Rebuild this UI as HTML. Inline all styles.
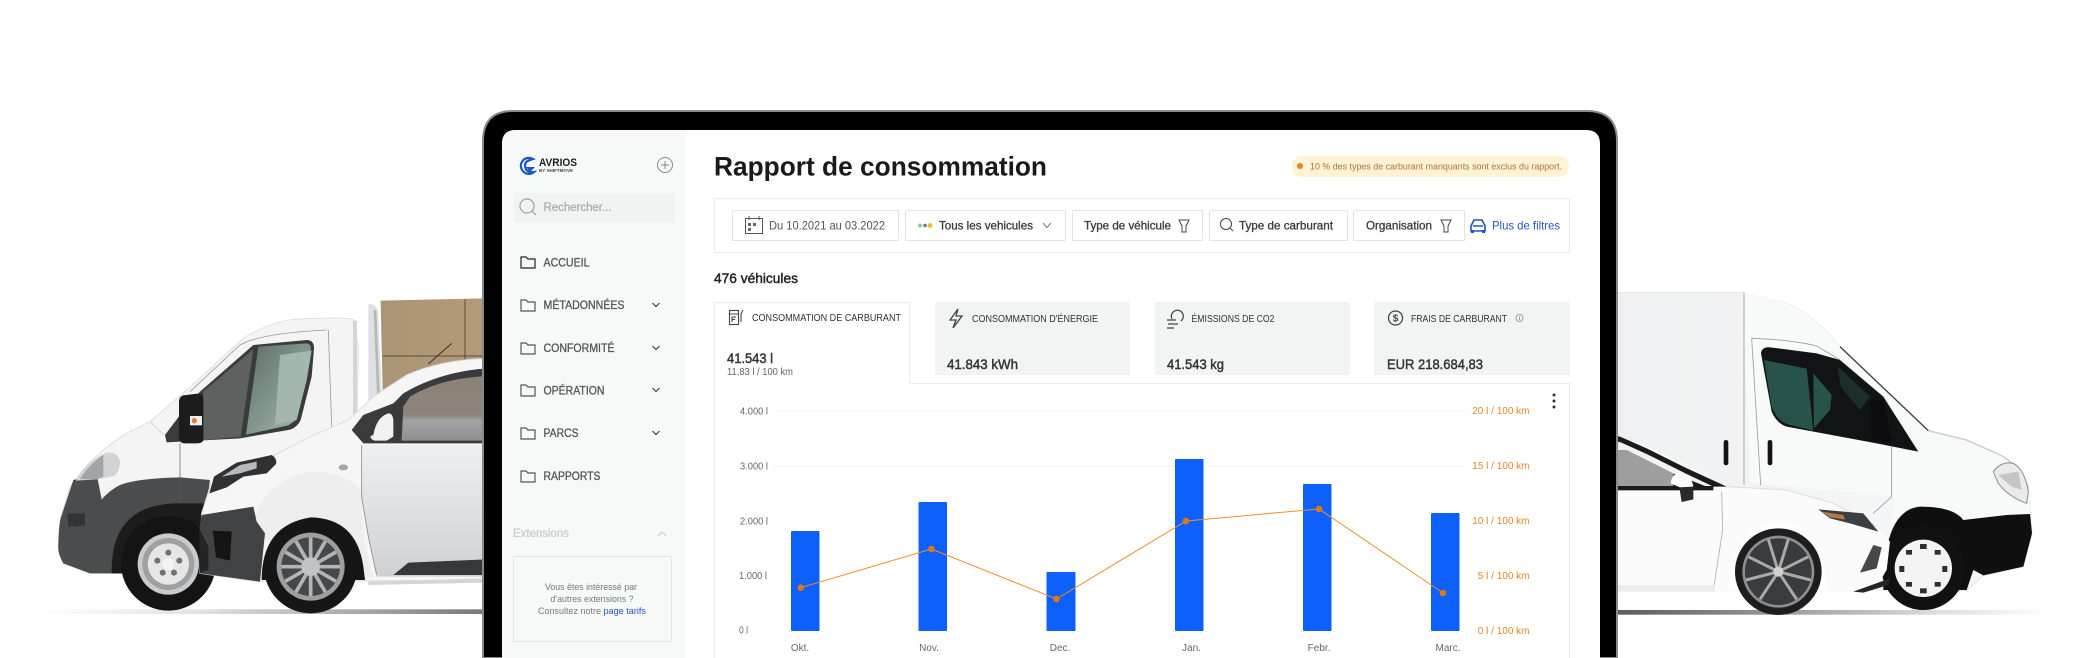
<!DOCTYPE html>
<html lang="fr"><head><meta charset="utf-8"><title>Rapport de consommation</title>
<style>
html,body{margin:0;padding:0;background:#fff;width:2087px;height:658px;overflow:hidden}
svg{display:block;filter:blur(.35px)}
text{font-family:"Liberation Sans",sans-serif;}
.nav{font-size:11.5px;fill:#555;stroke:#555;stroke-width:.3}
.k{font-size:10px;fill:#555}
.ch{font-size:12px;fill:#3a3a3a;stroke:#3a3a3a;stroke-width:.3}
.t{font-size:10px;fill:#333}
.v{font-size:14px;fill:#333;stroke:#333;stroke-width:.45}
.l{font-size:10px;fill:#666}
.r{font-size:10px;fill:#e8852a}
</style></head><body>
<svg width="2087" height="658" viewBox="0 0 2087 658" xmlns="http://www.w3.org/2000/svg">
<defs>
<linearGradient id="sh" x1="0" x2="1" y1="0" y2="0"><stop offset="0" stop-color="#fff"/><stop offset=".35" stop-color="#e2e2e2"/><stop offset=".7" stop-color="#aaa"/><stop offset="1" stop-color="#777"/></linearGradient>
<linearGradient id="shr" x1="0" x2="1" y1="0" y2="0"><stop offset="0" stop-color="#555"/><stop offset=".4" stop-color="#999"/><stop offset=".75" stop-color="#ddd"/><stop offset="1" stop-color="#fff"/></linearGradient>
<linearGradient id="box" x1="0" x2="1" y1="0" y2="0"><stop offset="0" stop-color="#ab9476"/><stop offset="1" stop-color="#b49a78"/></linearGradient>
<linearGradient id="door" x1="0" x2="0" y1="0" y2="1"><stop offset="0" stop-color="#eeeff0"/><stop offset=".6" stop-color="#dcdddf"/><stop offset="1" stop-color="#cfd0d2"/></linearGradient>
<linearGradient id="glass" x1="0" x2="1" y1="0" y2="1"><stop offset="0" stop-color="#5d6e65"/><stop offset="1" stop-color="#a8bdb0"/></linearGradient>
<linearGradient id="cg" x1="0" x2="0" y1="0" y2="1"><stop offset="0" stop-color="#8b8176"/><stop offset=".6" stop-color="#8c857c"/><stop offset=".7" stop-color="#a3a3a3"/><stop offset="1" stop-color="#8e8e8e"/></linearGradient>
<linearGradient id="vb" x1="0" x2="1" y1="0" y2="0"><stop offset="0" stop-color="#eff0f1"/><stop offset="1" stop-color="#f7f8f8"/></linearGradient>
</defs>
<rect width="2087" height="658" fill="#fff"/>

<!-- LEFT VEHICLES -->
<g transform="translate(40 280) scale(.33333)">
<rect x="0" y="988" width="1340" height="14" fill="url(#sh)"/>
<path d="M1022 62L1330 55V330H1028Z" fill="url(#box)"/>
<path d="M1275 58V240M1028 228H1330" stroke="#5f4c38" stroke-width="3" fill="none"/>
<path d="M1165 252L1235 190" stroke="#3a3028" stroke-width="3"/>
<path d="M985 72Q1010 70 1014 100L1026 345L985 400Z" fill="#dfe0e1"/>
<path d="M1005 90L1015 340" stroke="#9c9c9c" stroke-width="8" opacity=".6"/>
<path d="M940 118Q905 110 760 118Q680 130 610 175L440 330L330 425L260 460Q180 510 130 570L90 620L60 720L55 800L70 850L150 880H560L700 600L950 500L955 200Z" fill="#f4f4f5" stroke="#e0e0e1" stroke-width="3"/>
<path d="M945 122V420" stroke="#d5d5d6" stroke-width="12"/>
<path d="M865 150L875 440M450 335L600 195Q660 160 860 150" stroke="#9a9a9b" stroke-width="2.5" fill="none"/>
<path d="M330 425L372 465" stroke="#ccc" stroke-width="2"/>
<path d="M100 600Q140 590 172 592L185 658Q210 630 240 615Q290 595 420 592L510 600L500 680L480 880L150 880L70 850Q52 820 55 795Q56 740 62 715Z" fill="#4b4c4e"/>
<path d="M82 700H135V735L110 740H85Z" fill="#333436"/>
<path d="M215 880Q210 680 400 670L500 670L520 880Z" fill="#1c1c1d"/>
<circle cx="385" cy="850" r="142" fill="#141415"/>
<circle cx="385" cy="852" r="92" fill="#c9cacb"/>
<circle cx="385" cy="852" r="78" fill="#9fa0a1"/>
<circle cx="385" cy="852" r="62" fill="#e6e6e7"/>
<g fill="#6f7071"><circle cx="385" cy="818" r="9"/><circle cx="418" cy="842" r="9"/><circle cx="402" cy="878" r="9"/><circle cx="368" cy="878" r="9"/><circle cx="352" cy="842" r="9"/></g>
<circle cx="385" cy="852" r="18" fill="#f3f3f3"/>
<path d="M640 195L800 180Q822 180 822 205L815 290L782 420Q770 445 745 450L600 475L380 487L375 465L420 405L480 335Z" fill="#3a3c3c"/>
<path d="M655 200L800 190Q815 192 812 212L800 300L768 420L745 436L618 464Z" fill="url(#glass)"/>
<path d="M720 225L815 212L800 300L770 420L705 435Z" fill="#a4b7ac"/>
<path d="M640 208L602 470L490 480V335Z" fill="#5f6060"/>
<path d="M417 365Q417 345 440 345L478 340Q490 345 490 360V480Q488 490 470 490H430Q417 488 417 470Z" fill="#1c1c1d"/>
<rect x="450" y="408" width="36" height="28" fill="#eee"/><circle cx="463" cy="422" r="8" fill="#d9813e"/>
<path d="M108 602Q130 550 200 518Q235 515 240 545Q240 575 222 588L170 598Z" fill="#d2d3d4"/>
<path d="M120 597Q150 550 190 525V590L170 598Z" fill="#a3a4a5"/>
<path d="M420 490V670" stroke="#555" stroke-width="2"/>

<!-- car -->
<path d="M1340 235Q1200 240 1100 285L1000 350L925 420L810 470L700 528L560 570L510 620L485 700L480 880L650 905L1340 900V235Z" fill="#f6f6f7" stroke="#dcdcdd" stroke-width="3"/>
<path d="M965 495H1340V890H1010L985 770L965 650Z" fill="url(#door)"/>
<path d="M640 720Q680 600 800 578Q900 566 962 630L975 800L1000 890L960 900L640 760Z" fill="#eeeeef"/>
<path d="M1340 265Q1200 275 1090 340L1060 370L970 405L935 450L970 490H1340Z" fill="#3a3b3c"/>
<path d="M1340 288Q1200 295 1110 350L1090 380L1085 482H1340Z" fill="url(#cg)"/>
<path d="M1000 465Q1010 410 1045 400Q1060 400 1060 425V470L1040 482H1005Q990 478 992 468Z" fill="#f2f2f3"/>
<path d="M965 495V650L985 770L1010 885" stroke="#8c8c8d" stroke-width="2.5" fill="none"/>
<path d="M1060 885L1105 848L1340 838V885Z" fill="#37383a"/>
<path d="M985 905L1340 895V908L985 915Z" fill="#d5d5d6"/>
<ellipse cx="910" cy="562" rx="14" ry="9" fill="#a5a6a7"/>
<path d="M508 640L522 590L590 548L695 525Q712 535 708 552L680 580L610 590L560 622Z" fill="#303133"/>
<path d="M545 590L600 555L650 545L650 565L600 580Z" fill="#b8b9ba"/>
<path d="M485 705L640 680L650 725L675 760L660 905L480 880L478 745Z" fill="#414244"/>
<path d="M518 752L575 755L570 842L528 832Z" fill="#141415"/>
<path d="M478 745L505 800V870L480 878Z" fill="#232425"/>
<path d="M665 900Q665 735 812 712Q950 715 970 860L975 900Z" fill="#161617"/>
<circle cx="812" cy="860" r="140" fill="#161617"/>
<circle cx="812" cy="860" r="102" fill="#9d9e9f"/>
<circle cx="812" cy="860" r="88" fill="#464748"/>
<g stroke="#b3b4b5" stroke-width="11">
<path d="M812 860V772M812 860L856 784M812 860L888 816M812 860H900M812 860L888 904M812 860L856 936M812 860V948M812 860L768 936M812 860L736 904M812 860H724M812 860L736 816M812 860L768 784"/>
</g>
<circle cx="812" cy="860" r="28" fill="#c2c3c4"/>
</g>

<!-- RIGHT VEHICLES -->
<g transform="translate(1600 270) scale(.33333)">
<rect x="0" y="1020" width="1350" height="14" fill="url(#shr)"/>
<path d="M0 68H430L560 100Q650 140 720 230L985 482L1100 510L1190 550Q1250 575 1285 650L1292 740L1296 790L1270 890L1150 916L1100 960H0Z" fill="url(#vb)" stroke="#e2e3e4" stroke-width="3"/>
<path d="M430 65L560 100Q650 140 720 230L860 360L985 482L1100 510L1190 550Q1250 575 1285 650L1292 740L1100 780L870 900L880 680L450 640Z" fill="#f8f9f9"/>
<path d="M985 482L1100 510L1190 550Q1250 575 1285 650" fill="none" stroke="#c9cacc" stroke-width="4"/>
<path d="M432 68V645M455 205L482 645M455 205Q580 210 650 228L720 270M875 530V680L820 730" stroke="#9c9d9e" stroke-width="2.5" fill="none"/>
<path d="M720 230L985 482" stroke="#3f4045" stroke-width="4"/>
<path d="M483 250Q485 230 510 232L650 250L720 270L850 380L955 545L830 520L560 470Q530 460 515 425Z" fill="#121315"/>
<path d="M492 270L620 296L640 482L560 462Q530 450 515 410Z" fill="#27534b"/>
<path d="M640 310L695 375L690 420L642 475Z" fill="#27534b"/>
<path d="M712 288L810 380L780 420L722 350Z" fill="#1b2e2a"/>
<path d="M810 395L850 385L875 520L815 510Z" fill="#0d0d0f"/>
<rect x="371" y="510" width="14" height="76" rx="7" fill="#141416"/>
<rect x="503" y="510" width="14" height="76" rx="7" fill="#141416"/>
<path d="M1180 605Q1205 572 1240 580Q1275 600 1285 665L1280 700Q1225 680 1195 640Z" fill="#eaeaeb" stroke="#8f9092" stroke-width="3"/>
<path d="M1195 615L1255 605L1265 660L1235 650Z" fill="#c4c5c6"/>
<path d="M850 960Q850 720 960 710Q1060 710 1090 750L1220 735L1290 732L1296 790L1270 890L1150 916L1120 900L1100 960Z" fill="#0f0f10"/>
<circle cx="970" cy="895" r="125" fill="#111112"/>
<circle cx="970" cy="895" r="86" fill="#f3f3f4"/>
<g fill="#2e2e30"><rect x="960" y="822" width="20" height="15"/><rect x="960" y="955" width="20" height="15"/><rect x="898" y="888" width="15" height="18"/><rect x="1027" y="888" width="15" height="18"/><rect x="918" y="840" width="18" height="14"/><rect x="1004" y="840" width="18" height="14"/><rect x="918" y="936" width="18" height="14"/><rect x="1004" y="936" width="18" height="14"/></g>

<path d="M0 495L120 520L250 580L380 650L560 660L700 700L830 770L870 815L860 900L830 950L760 967H0Z" fill="#fbfbfc"/>
<path d="M380 650L560 660L700 700L830 770" fill="none" stroke="#dcdcdd" stroke-width="3"/>
<path d="M0 490L60 500L140 535L250 590L380 650H0Z" fill="#1a1b1c"/>
<path d="M0 510L60 516L140 552L260 612L340 650H320L0 525Z" fill="#f2f2f3"/>
<path d="M0 540H80L220 610V648H0Z" fill="#9e9e9f"/>
<rect x="0" y="648" width="340" height="13" fill="#1a1b1c"/>
<path d="M212 640Q215 610 240 610Q275 615 280 650L240 652Z" fill="#fbfbfb"/>
<path d="M238 652H280V688L245 696Z" fill="#2a2a2c"/>
<path d="M365 665L368 780L342 948" stroke="#adadae" stroke-width="2.5" fill="none"/>
<path d="M655 718L790 730L835 785L750 760L690 745Z" fill="#3d3e40"/>
<path d="M665 725L730 735L735 748L690 742Z" fill="#b27a45"/>
<path d="M820 825L780 908L830 895L845 832Z" fill="#464749"/>
<path d="M760 965L870 925L865 945L790 968Z" fill="#242526"/>
<path d="M0 965H380V990H0Z" fill="#fff"/>
<path d="M0 945H345V965H0Z" fill="#ececed"/>
<path d="M385 960Q390 770 540 755Q660 760 682 960Z" fill="#fff"/>
<circle cx="535" cy="905" r="130" fill="#1e1e20"/>
<circle cx="535" cy="905" r="108" fill="#8d8e8f"/>
<circle cx="535" cy="905" r="100" fill="#3a3b3d"/>
<g stroke="#a8a9aa" stroke-width="9"><path d="M535 905L505 808M535 905L565 808M535 905L625 860M535 905L632 930M535 905L590 988M535 905L480 988M535 905L438 930M535 905L445 860"/></g>
<circle cx="535" cy="905" r="15" fill="#cfcfd0"/>
</g>

<!-- LAPTOP -->
<path d="M483 658V141Q483 111 513 111H1587Q1617 111 1617 141V658Z" fill="#000" stroke="#8a8a8a" stroke-width="2"/>
<path d="M502 658V144Q502 130 516 130H1586Q1600 130 1600 144V658Z" fill="#fff"/>
<path d="M686 130H516Q502 130 502 144V658H686Z" fill="#f7f8f8"/>

<!-- Sidebar -->
<path d="M533 159A8 8 0 1 0 534 172Q525 173 525 165Q525 161 533 159Z" fill="none" stroke="#1a56c4" stroke-width="2.2"/>
<path d="M526 167L535 167L530 172Z" fill="#1a56c4"/>
<text x="539" y="166" font-size="11" font-weight="bold" fill="#1d1d1f" textLength="38" lengthAdjust="spacingAndGlyphs">AVRIOS</text>
<text x="539" y="172" font-size="4.5" font-weight="bold" fill="#444" textLength="34" lengthAdjust="spacingAndGlyphs">BY SHIFTMOVE</text>
<circle cx="665" cy="165" r="7.5" fill="none" stroke="#888" stroke-width="1"/>
<path d="M665 161V169M661 165H669" stroke="#888" stroke-width="1"/>
<rect x="514" y="193" width="161" height="29" fill="#f1f2f2" rx="2"/>
<circle cx="527" cy="206" r="7" fill="none" stroke="#a5a5a5" stroke-width="1.3"/><path d="M532 211L536 215" stroke="#a5a5a5" stroke-width="1.3"/>
<text x="543.5" y="211" font-size="11.5" fill="#adadad" stroke="#adadad" stroke-width=".3" textLength="68" lengthAdjust="spacingAndGlyphs">Rechercher...</text>

<g fill="none" stroke="#555" stroke-width="1.2">
<path d="M521 268V257H526L528 259H535V268Z" stroke="#222"/>
<path d="M521 311V300H526L528 302H535V311Z"/>
<path d="M521 354V343H526L528 345H535V354Z"/>
<path d="M521 396V385H526L528 387H535V396Z"/>
<path d="M521 439V428H526L528 430H535V439Z"/>
<path d="M521 482V471H526L528 473H535V482Z"/>
<path d="M652.500 303L656 306.500L659.500 303M652.500 346L656 349.500L659.500 346M652.500 388L656 391.500L659.500 388M652.500 431L656 434.500L659.500 431" stroke="#444"/>
</g>
<text class="nav" x="543.5" y="266.5" textLength="46" lengthAdjust="spacingAndGlyphs">ACCUEIL</text>
<text class="nav" x="543.5" y="309" textLength="81" lengthAdjust="spacingAndGlyphs">MÉTADONNÉES</text>
<text class="nav" x="543.5" y="352" textLength="71" lengthAdjust="spacingAndGlyphs">CONFORMITÉ</text>
<text class="nav" x="543.5" y="394.5" textLength="61" lengthAdjust="spacingAndGlyphs">OPÉRATION</text>
<text class="nav" x="543.5" y="437" textLength="35" lengthAdjust="spacingAndGlyphs">PARCS</text>
<text class="nav" x="543.5" y="480" textLength="57" lengthAdjust="spacingAndGlyphs">RAPPORTS</text>
<text x="513" y="537" font-size="12" fill="#cdcdcd" stroke="#cdcdcd" stroke-width=".3" textLength="56" lengthAdjust="spacingAndGlyphs">Extensions</text>
<path d="M658 536L662 532L666 536" fill="none" stroke="#ccc" stroke-width="1.2"/>
<rect x="513.5" y="556.5" width="158" height="85" fill="none" stroke="#e6e6e6"/>
<text x="591" y="590" font-size="9.5" fill="#777" text-anchor="middle" textLength="92" lengthAdjust="spacingAndGlyphs">Vous êtes intéressé par</text>
<text x="592" y="602" font-size="9.5" fill="#777" text-anchor="middle" textLength="83" lengthAdjust="spacingAndGlyphs">d'autres extensions ?</text>
<text x="538" y="614" font-size="9.5" fill="#777" textLength="63" lengthAdjust="spacingAndGlyphs">Consultez notre</text>
<text x="603.5" y="614" font-size="9.5" fill="#2456c4" textLength="42.5" lengthAdjust="spacingAndGlyphs">page tarifs</text>

<!-- Header -->
<text x="714" y="175.500" font-size="27" font-weight="bold" fill="#1a1a1a" textLength="333" lengthAdjust="spacingAndGlyphs">Rapport de consommation</text>
<rect x="1292" y="156" width="277" height="21" rx="10" fill="#fff3d6"/>
<circle cx="1300" cy="166" r="3" fill="#e8811a"/>
<text x="1310" y="169.5" font-size="9.5" fill="#b0712c" textLength="252" lengthAdjust="spacingAndGlyphs">10 % des types de carburant manquants sont exclus du rapport.</text>

<!-- Filters -->
<rect x="714.5" y="198.5" width="855" height="54" fill="#fff" stroke="#ececec"/>
<g fill="#fff" stroke="#e3e3e3">
<rect x="732.5" y="210.5" width="166" height="30" rx="1"/>
<rect x="905.5" y="210.5" width="160" height="30" rx="1"/>
<rect x="1072.5" y="210.5" width="130" height="30" rx="1"/>
<rect x="1209.5" y="210.5" width="138" height="30" rx="1"/>
<rect x="1353.5" y="210.5" width="111" height="30" rx="1"/>
</g>
<g fill="none" stroke="#555" stroke-width="1">
<rect x="745.5" y="218.5" width="17" height="15"/><path d="M749 216V220M759 216V220"/>
<path d="M1043 223L1047 227.500L1051 223" stroke="#777"/>
<path d="M1179 220H1189L1186 226V232H1182V226Z" stroke="#444"/>
<circle cx="1226" cy="224" r="5.500" stroke="#444"/><path d="M1230 228L1233 231" stroke="#444"/>
<path d="M1441 220H1451L1448 226V232H1444V226Z" stroke="#444"/>
</g>
<path d="M748 223h3v3h-3zM753 223h3v3h-3zM748 228h3v3h-3z" fill="#666"/>
<circle cx="920" cy="225.500" r="2" fill="#8fc79c"/><circle cx="925" cy="225.500" r="1.800" fill="#777"/><circle cx="930" cy="225.500" r="2.400" fill="#f2b92e"/>
<text x="769" y="229.500" font-size="12" fill="#555" textLength="116" lengthAdjust="spacingAndGlyphs">Du 10.2021 au 03.2022</text>
<text class="ch" x="939" y="229.500" textLength="94" lengthAdjust="spacingAndGlyphs">Tous les vehicules</text>
<text class="ch" x="1084" y="229.500" textLength="87" lengthAdjust="spacingAndGlyphs">Type de véhicule</text>
<text class="ch" x="1239" y="229.500" textLength="94" lengthAdjust="spacingAndGlyphs">Type de carburant</text>
<text class="ch" x="1366" y="229.500" textLength="66" lengthAdjust="spacingAndGlyphs">Organisation</text>
<path d="M1471 226L1474 220H1482L1485 226V231H1471Z M1473 226H1483" fill="none" stroke="#1a56c4" stroke-width="1.600"/>
<rect x="1471" y="230" width="3" height="3" fill="#1a56c4"/><rect x="1482" y="230" width="3" height="3" fill="#1a56c4"/>
<text x="1492" y="229.500" font-size="12" fill="#2456c4" textLength="68" lengthAdjust="spacingAndGlyphs">Plus de filtres</text>

<text x="714" y="283" font-size="14" fill="#222" stroke="#222" stroke-width=".45" textLength="84" lengthAdjust="spacingAndGlyphs">476 véhicules</text>

<!-- Tabs -->
<path d="M714.500 658V302.500H909.500V383.500H1569.500V658" fill="none" stroke="#ececec"/>
<g fill="#f2f3f3">
<rect x="935" y="302" width="195" height="73" rx="1"/>
<rect x="1155" y="302" width="195" height="73" rx="1"/>
<rect x="1374" y="302" width="196" height="73" rx="1"/>
</g>
<g fill="none" stroke="#444" stroke-width="1.100">
<rect x="729.500" y="310.500" width="9" height="14"/><path d="M729.500 314H738.500M732 322V317H736M732 319.500H735M741 322V314L743 310"/>
<path d="M958 309L950 320H956L953 328L962 316H956Z" stroke-width="1.300"/>
<path d="M1172 319A6 6 0 1 1 1181 321M1167 320H1176M1168 324H1178M1167 328H1174" stroke-width="1.200"/>
<circle cx="1395.500" cy="318" r="7" stroke-width="1.300"/>
<circle cx="1519.500" cy="318" r="3.500" stroke="#888" stroke-width=".8"/>
<path d="M1519.500 316.500V320" stroke="#888" stroke-width=".8"/>
</g>
<text x="1395.500" y="321.500" font-size="10" font-weight="bold" text-anchor="middle" fill="#444">$</text>
<text class="t" x="752" y="321" textLength="149" lengthAdjust="spacingAndGlyphs">CONSOMMATION DE CARBURANT</text>
<text class="t" x="972" y="322" textLength="126" lengthAdjust="spacingAndGlyphs">CONSOMMATION D'ÉNERGIE</text>
<text class="t" x="1191.500" y="322" textLength="83" lengthAdjust="spacingAndGlyphs">ÉMISSIONS DE CO2</text>
<text class="t" x="1411" y="322" textLength="96" lengthAdjust="spacingAndGlyphs">FRAIS DE CARBURANT</text>
<text class="v" x="727" y="363" textLength="46" lengthAdjust="spacingAndGlyphs">41.543 l</text>
<text x="727" y="375" font-size="10" fill="#666" textLength="66" lengthAdjust="spacingAndGlyphs">11,83 l / 100 km</text>
<text class="v" x="947" y="369" textLength="71" lengthAdjust="spacingAndGlyphs">41.843 kWh</text>
<text class="v" x="1167" y="369" textLength="57" lengthAdjust="spacingAndGlyphs">41.543 kg</text>
<text class="v" x="1387" y="369" textLength="96" lengthAdjust="spacingAndGlyphs">EUR 218.684,83</text>

<!-- Chart -->
<path d="M773 411H1468M773 466H1468" stroke="#f3f3f3"/>
<g fill="#0e60fb">
<rect x="791" y="531" width="28.500" height="100" rx="1"/>
<rect x="918.500" y="502" width="28.500" height="129" rx="1"/>
<rect x="1046.500" y="572" width="29" height="59" rx="1"/>
<rect x="1175" y="459" width="28.500" height="172" rx="1"/>
<rect x="1303" y="484" width="28.500" height="147" rx="1"/>
<rect x="1431" y="513" width="28.500" height="118" rx="1"/>
</g>
<polyline points="800.700,587.700 931.400,549 1056.500,599 1186,521 1319,509 1443,593" fill="none" stroke="#e8902f" stroke-width="1"/>
<g fill="#e0760f"><circle cx="800.700" cy="587.700" r="3.300"/><circle cx="931.400" cy="549" r="3.300"/><circle cx="1056.500" cy="599" r="3.300"/><circle cx="1186" cy="521" r="3.300"/><circle cx="1319" cy="509" r="3.300"/><circle cx="1443" cy="593" r="3.300"/></g>
<text class="l" x="740" y="414.500" textLength="28" lengthAdjust="spacingAndGlyphs">4.000 l</text>
<text class="l" x="740" y="469.500" textLength="28" lengthAdjust="spacingAndGlyphs">3.000 l</text>
<text class="l" x="740" y="524.500" textLength="28" lengthAdjust="spacingAndGlyphs">2.000 l</text>
<text class="l" x="739" y="579" textLength="28" lengthAdjust="spacingAndGlyphs">1.000 l</text>
<text class="l" x="739" y="633.500" textLength="9" lengthAdjust="spacingAndGlyphs">0 l</text>
<g text-anchor="end">
<text class="r" x="1529.500" y="414">20 l / 100 km</text>
<text class="r" x="1529.500" y="469">15 l / 100 km</text>
<text class="r" x="1529.500" y="524">10 l / 100 km</text>
<text class="r" x="1529.500" y="579">5 l / 100 km</text>
<text class="r" x="1529.500" y="634">0 l / 100 km</text>
</g>
<g text-anchor="middle">
<text class="l" x="800" y="651">Okt.</text>
<text class="l" x="929" y="651">Nov.</text>
<text class="l" x="1060" y="651">Dec.</text>
<text class="l" x="1191.500" y="651">Jan.</text>
<text class="l" x="1319" y="651">Febr.</text>
<text class="l" x="1448" y="651">Marc.</text>
</g>
<g fill="#333"><circle cx="1554" cy="395" r="1.500"/><circle cx="1554" cy="401" r="1.500"/><circle cx="1554" cy="407" r="1.500"/></g>
</svg>
</body></html>
